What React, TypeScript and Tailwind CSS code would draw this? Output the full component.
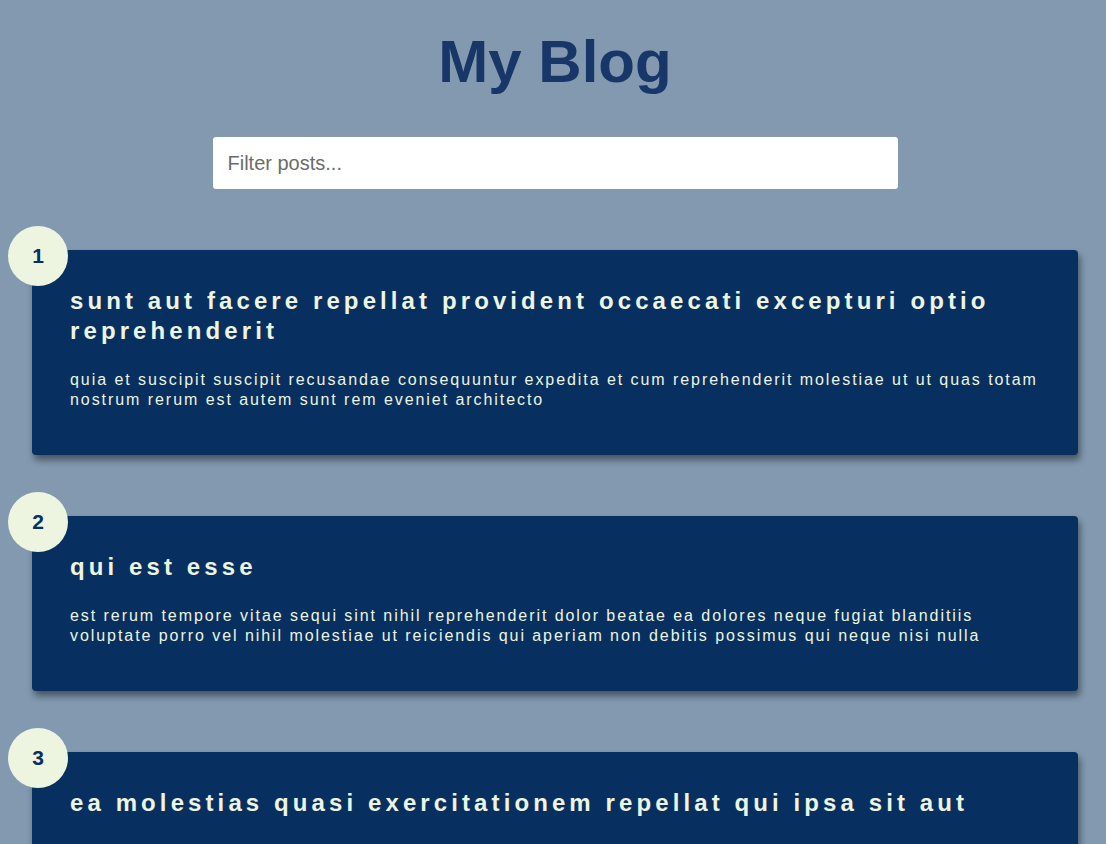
const posts = [
  {
    id: 1,
    title:
      "sunt aut facere repellat provident occaecati excepturi optio reprehenderit",
    body: "quia et suscipit suscipit recusandae consequuntur expedita et cum reprehenderit molestiae ut ut quas totam nostrum rerum est autem sunt rem eveniet architecto",
  },
  {
    id: 2,
    title: "qui est esse",
    body: "est rerum tempore vitae sequi sint nihil reprehenderit dolor beatae ea dolores neque fugiat blanditiis voluptate porro vel nihil molestiae ut reiciendis qui aperiam non debitis possimus qui neque nisi nulla",
  },
  {
    id: 3,
    title: "ea molestias quasi exercitationem repellat qui ipsa sit aut",
    body: "et iusto sed quo iure voluptatem occaecati omnis eligendi aut ad voluptatem doloribus vel accusantium quis pariatur molestiae porro eius odio et labore et velit aut",
  },
];

const Post = ({ id, title, body }: { id: number; title: string; body: string }) => {
  return (
    <div className="relative w-[1046px] rounded-[4px] bg-[#072f5f] px-[38px] pt-[36px] pb-[45px] shadow-[2px_5px_7px_rgba(0,0,0,0.45)]">
      {/* Number badge */}
      <div className="absolute -top-[24px] -left-[24px] flex h-[60px] w-[60px] items-center justify-center rounded-full bg-[#edf5e1] text-[21px] font-bold text-[#072f5f]">
        {id}
      </div>
      <h2 className="mb-[24px] text-[24px] leading-[30px] font-bold tracking-[4.1px] text-[#edf5e1]">
        {title}
      </h2>
      <p className="text-[16px] leading-[20px] tracking-[1.94px] text-[#edf5e1]">
        {body}
      </p>
    </div>
  );
};

export default function App() {
  return (
    <div className="min-h-screen bg-[#8299b0] pl-[4px] pt-[28px] pb-[60px] font-['Liberation_Sans',Arial,sans-serif]">
      <div className="flex flex-col items-center">
        <h1 className="text-[60px] leading-[67px] font-bold text-[#183668]">My Blog</h1>

        <input
          type="text"
          placeholder="Filter posts..."
          className="mt-[42px] h-[52px] w-[685px] rounded-[3px] bg-white px-[15px] text-[20px] text-gray-700 outline-none placeholder:text-[#6b6b6b]"
        />

        <div className="mt-[61px] flex flex-col gap-[61px]">
          {posts.map((p) => (
            <Post key={p.id} {...p} />
          ))}
        </div>
      </div>
    </div>
  );
}
